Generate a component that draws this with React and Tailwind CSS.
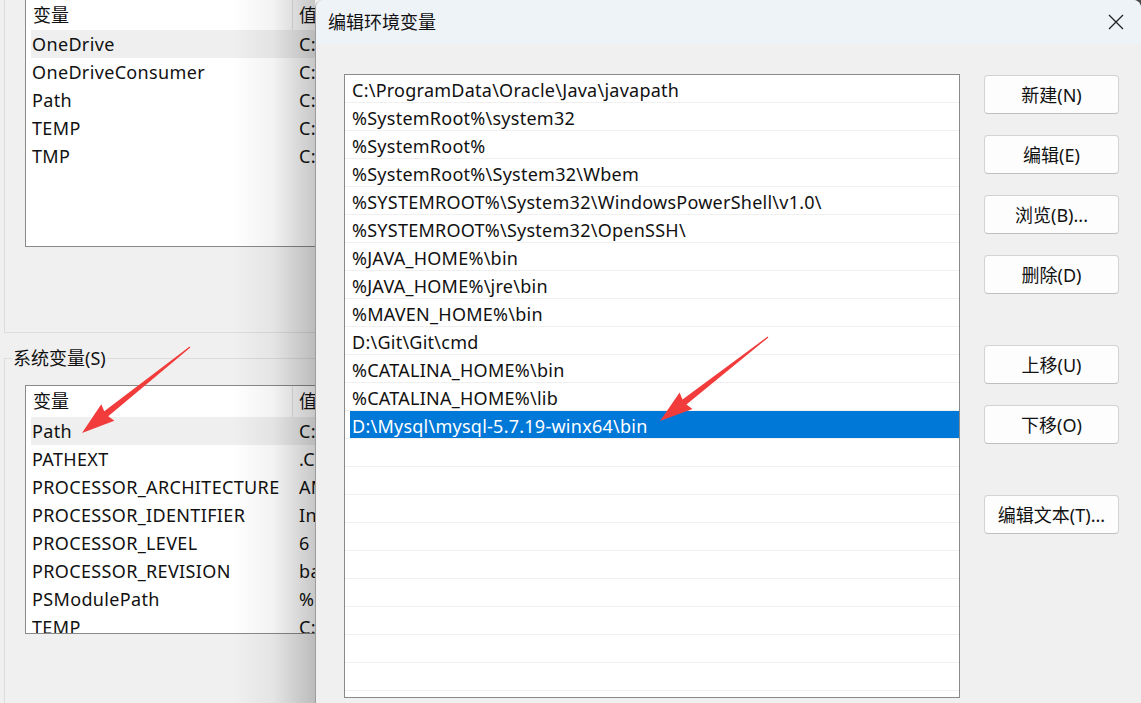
import React from 'react'

const font = "font-['Noto_Sans','Noto_Sans_CJK_SC',sans-serif]"

const userVars = [
  ['OneDrive', 'C:\\Users\\Administrator\\OneDrive'],
  ['OneDriveConsumer', 'C:\\Users\\Administrator\\OneDrive'],
  ['Path', 'C:\\Users\\Administrator\\AppData'],
  ['TEMP', 'C:\\Users\\Administrator\\AppData'],
  ['TMP', 'C:\\Users\\Administrator\\AppData'],
]

const sysVars = [
  ['Path', 'C:\\ProgramData\\Oracle'],
  ['PATHEXT', '.COM;.EXE;.BAT'],
  ['PROCESSOR_ARCHITECTURE', 'AMD64'],
  ['PROCESSOR_IDENTIFIER', 'Intel64 Family 6'],
  ['PROCESSOR_LEVEL', '6'],
  ['PROCESSOR_REVISION', 'ba02'],
  ['PSModulePath', '%ProgramFiles%\\WindowsPowerShell'],
  ['TEMP', 'C:\\WINDOWS\\TEMP'],
]

const paths = [
  'C:\\ProgramData\\Oracle\\Java\\javapath',
  '%SystemRoot%\\system32',
  '%SystemRoot%',
  '%SystemRoot%\\System32\\Wbem',
  '%SYSTEMROOT%\\System32\\WindowsPowerShell\\v1.0\\',
  '%SYSTEMROOT%\\System32\\OpenSSH\\',
  '%JAVA_HOME%\\bin',
  '%JAVA_HOME%\\jre\\bin',
  '%MAVEN_HOME%\\bin',
  'D:\\Git\\Git\\cmd',
  '%CATALINA_HOME%\\bin',
  '%CATALINA_HOME%\\lib',
  'D:\\Mysql\\mysql-5.7.19-winx64\\bin',
]
const selectedIndex = 12

// button label + top margin (gap above)
const buttons = [
  ['新建(N)', 'mt-0'],
  ['编辑(E)', 'mt-[21px]'],
  ['浏览(B)...', 'mt-[21px]'],
  ['删除(D)', 'mt-[21px]'],
  ['上移(U)', 'mt-[51px]'],
  ['下移(O)', 'mt-[21px]'],
  ['编辑文本(T)...', 'mt-[51px]'],
]

function VarList({ rows, highlight, headerClass, className }) {
  return (
    <div className={`overflow-hidden border-l border-[#8a8a8a] bg-white ${className}`}>
      <div className={`flex items-center ${headerClass}`}>
        <div className="w-[266px] pl-[7px]">变量</div>
        <div className="flex h-full items-center border-l border-[#e5e5e5] pl-[6px]">值</div>
      </div>
      {rows.map(([name, value], i) => (
        <div
          key={name + i}
          className={`ml-[5px] flex h-[28px] items-center tracking-[0.35px] ${i === highlight ? 'bg-[#efefef]' : ''}`}
        >
          <div className="w-[261px] shrink-0 pl-[1px] whitespace-nowrap">{name}</div>
          <div className="pl-[7px] whitespace-nowrap">{value}</div>
        </div>
      ))}
    </div>
  )
}

function arrowPoints(x1, y1, x2, y2) {
  const dx = x2 - x1
  const dy = y2 - y1
  const len = Math.hypot(dx, dy)
  const ux = dx / len
  const uy = dy / len
  const nx = -uy
  const ny = ux
  const headLen = 31
  const bx = x2 - ux * headLen
  const by = y2 - uy * headLen
  const p = (x, y, w) => `${x + nx * w},${y + ny * w}`
  return [
    p(x1, y1, 0.6),
    p(bx, by, 3.2),
    p(bx - ux * 2, by - uy * 2, 10.5),
    `${x2},${y2}`,
    p(bx - ux * 2, by - uy * 2, -10.5),
    p(bx, by, -3.2),
    p(x1, y1, -0.6),
  ].join(' ')
}

export default function App() {
  return (
    <div className={`relative h-[703px] w-[1141px] overflow-hidden bg-[#f0f0f0] text-[18px] text-[#111] ${font}`}>
      {/* desktop peeking behind the dialog's top-right corner */}
      <div className="absolute top-0 right-0 h-[16px] w-[24px] bg-[#4b4b4b]" />

      <div className="relative flex h-full">
        {/* environment variables window, mostly covered */}
        <div className="w-[315px] shrink-0 overflow-hidden">
          <div className="ml-[4px] h-[333px] border-b border-l border-[#dcdcdc] pl-[20px]">
            <VarList
              rows={userVars}
              highlight={0}
              headerClass="h-[30px]"
              className="h-[247px] w-[420px] border-b"
            />
          </div>

          <div className="mt-[13px] ml-[4px] flex h-[24px] items-stretch">
            <div className="mt-[12px] w-[8px] border-t border-l border-[#dcdcdc]" />
            <span className="flex items-center px-[1px] leading-none">系统变量(S)</span>
            <div className="mt-[12px] flex-1 border-t border-[#dcdcdc]" />
          </div>
          <div className="ml-[4px] h-[340px] border-l border-[#dcdcdc] pt-[15px] pl-[20px]">
            <VarList
              rows={sysVars}
              highlight={0}
              headerClass="h-[31px]"
              className="h-[249px] w-[420px] border-t border-b"
            />
          </div>
        </div>

        {/* edit dialog */}
        <div className="flex flex-1 flex-col overflow-hidden rounded-t-[8px] border-l border-[#9d9d9d] bg-[#f0f0f0]">
          <div className="flex h-[44px] shrink-0 items-center justify-between bg-[#eef3f8] pr-[17px] pl-[12px]">
            <span>编辑环境变量</span>
            <svg width="16" height="16" viewBox="0 0 16 16" fill="none" stroke="#222" strokeWidth="1.3">
              <path d="M1 1L15 15M15 1L1 15" />
            </svg>
          </div>

          <div className="flex pt-[30px] pl-[28px]">
            <div className="h-[624px] w-[616px] shrink-0 overflow-hidden border border-[#8a8a8a] bg-white">
              {Array.from({ length: 23 }).map((_, i) => {
                const text = paths[i]
                const sel = i === selectedIndex
                return (
                  <div key={i} className="flex h-[28px] border-b border-[#f0f0f0]">
                    <div
                      className={`flex flex-1 items-center pt-[3px] tracking-[0.25px] whitespace-nowrap ${
                        sel ? 'ml-[5px] bg-[#0078d7] pl-[2px] text-white' : 'pl-[7px]'
                      }`}
                    >
                      {text}
                    </div>
                  </div>
                )
              })}
            </div>

            <div className="ml-[24px] flex flex-col pt-[1px]">
              {buttons.map(([label, mt]) => (
                <button
                  key={label}
                  className={`flex h-[39px] w-[135px] items-center justify-center rounded-[4px] border border-[#d3d3d3] border-b-[#bfbfbf] bg-[#fdfdfd] pt-[1px] ${mt}`}
                >
                  {label}
                </button>
              ))}
            </div>
          </div>
        </div>
      </div>

      {/* dialog drop shadow over the window behind */}
      <div className="pointer-events-none absolute top-0 bottom-0 left-[232px] w-[83px] bg-linear-to-r from-transparent via-black/[0.05] to-black/[0.22]" />

      {/* red annotation arrows */}
      <svg className="pointer-events-none absolute inset-0" width="1141" height="703">
        <polygon points={arrowPoints(190, 347, 82, 433)} fill="#f23c3c" />
        <polygon points={arrowPoints(768, 337, 660, 421)} fill="#f23c3c" />
      </svg>
    </div>
  )
}
